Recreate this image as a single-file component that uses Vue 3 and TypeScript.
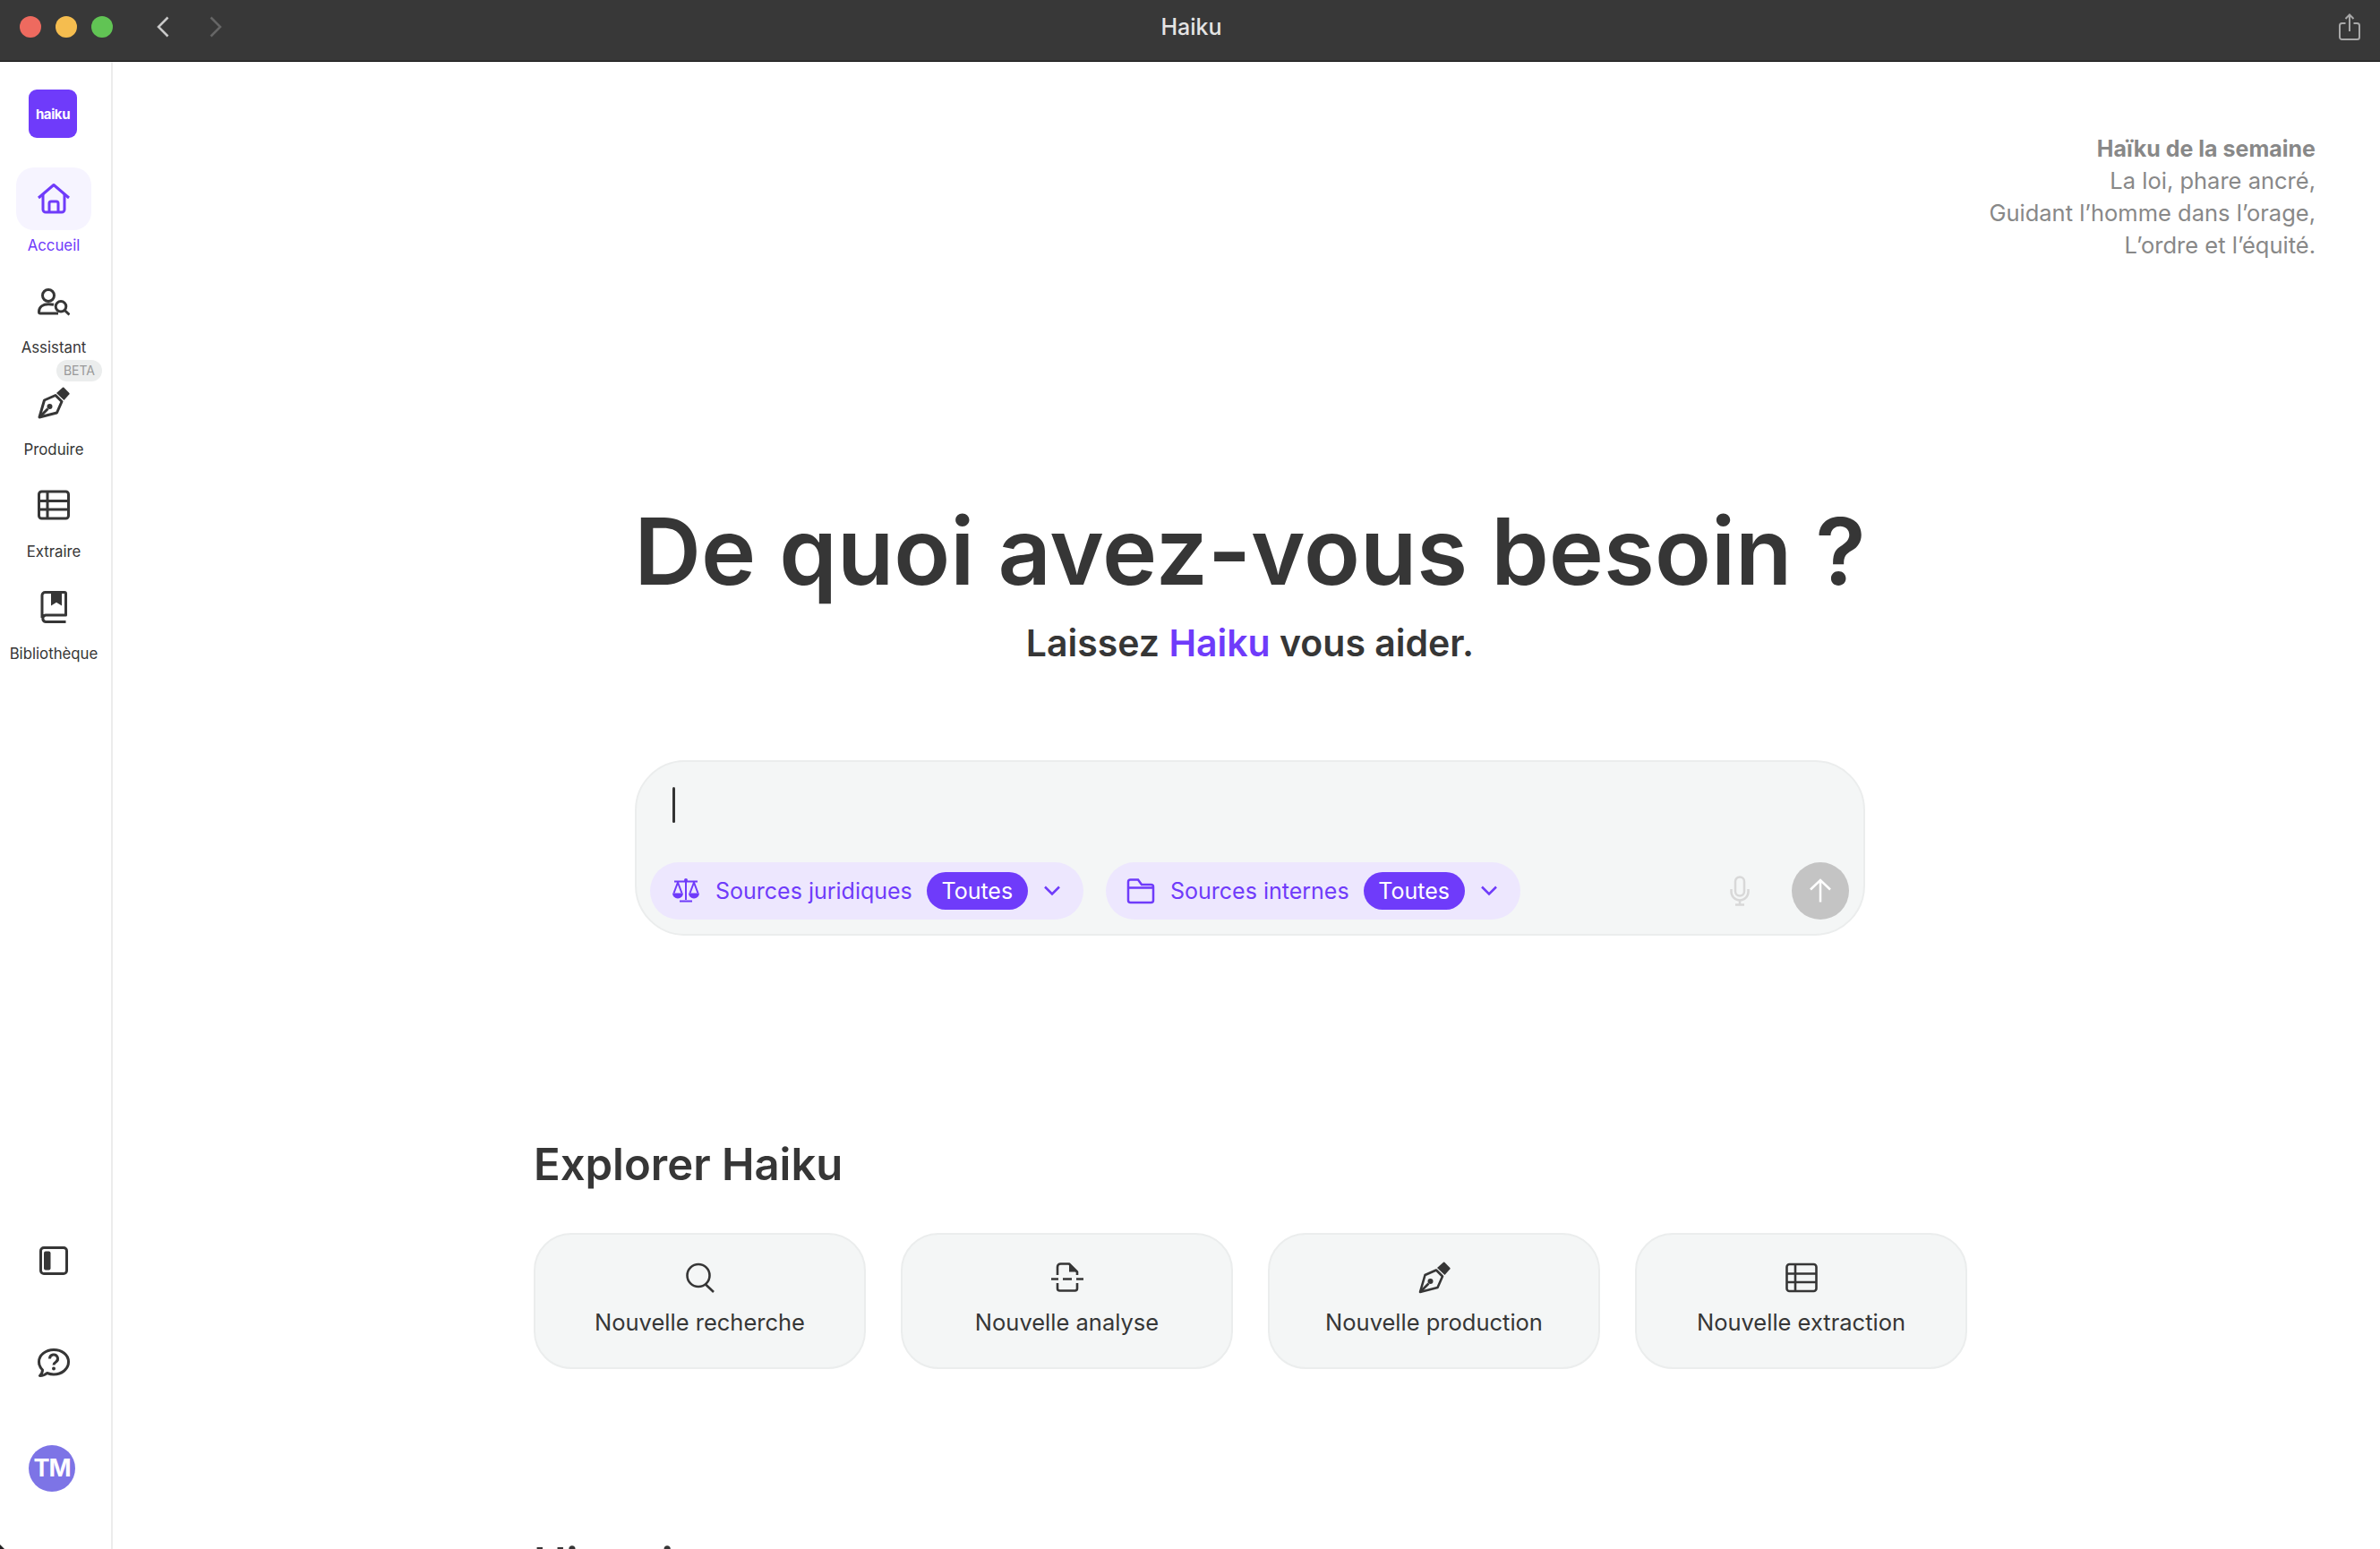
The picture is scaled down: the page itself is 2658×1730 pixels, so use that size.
<script setup lang="ts">
type Shape = { d: string; solid?: boolean }

const pen: Shape[] = [
  { d: 'M2 34 7.5 15 20 9.5 27 16.5 21.5 29Z' },
  { d: 'M21 7 28 .8a1 1 0 0 1 1.3 0L35.4 7a1 1 0 0 1 0 1.3L29.5 15Z', solid: true },
  { d: 'M2 34 11.5 24.5' },
  { d: 'M10.5 22a3 3 0 1 1 6 0 3 3 0 0 1-6 0Z', solid: true },
]
const table: Shape[] = [
  { d: 'M4.5 3h27a3 3 0 0 1 3 3v24a3 3 0 0 1-3 3h-27a3 3 0 0 1-3-3V6a3 3 0 0 1 3-3Z' },
  { d: 'M1.5 13.5h33M1.5 23h33M11 3v30' },
]

const navItems: { label: string; shapes: Shape[]; active?: boolean; beta?: boolean }[] = [
  {
    label: 'Accueil',
    active: true,
    shapes: [
      { d: 'M1 17 18 2.5 35 17' },
      { d: 'M6 13v17a3 3 0 0 0 3 3h18a3 3 0 0 0 3-3V13' },
      { d: 'M13 33V23a2 2 0 0 1 2-2h6a2 2 0 0 1 2 2v10' },
    ],
  },
  {
    label: 'Assistant',
    shapes: [
      { d: 'M12 5.5a6.5 6.5 0 1 0 0 13 6.5 6.5 0 0 0 0-13Z' },
      { d: 'M18 22.3c-1.6-.4-3.6-.6-6-.6-6 0-10.5 3-10.5 8.5 0 1.3.6 1.8 1.5 1.8h20' },
      { d: 'M26 18.5a5.8 5.8 0 1 0 0 11.6 5.8 5.8 0 0 0 0-11.6Z' },
      { d: 'M30.2 28.5 35.5 33.5' },
    ],
  },
  { label: 'Produire', beta: true, shapes: pen },
  { label: 'Extraire', shapes: table },
  {
    label: 'Bibliothèque',
    shapes: [
      { d: 'M5 30V5a3.5 3.5 0 0 1 3.5-3.5H30a1.5 1.5 0 0 1 1.5 1.5v24H9a3.8 3.8 0 0 0 0 7.5h22.5' },
      { d: 'M15 1.5h12v15l-6-3.8-6 3.8Z', solid: true },
    ],
  },
]

const cards: { label: string; shapes: Shape[] }[] = [
  {
    label: 'Nouvelle recherche',
    shapes: [
      { d: 'M16 3a12.5 12.5 0 1 0 0 25 12.5 12.5 0 0 0 0-25Z' },
      { d: 'M23.5 25 33 34' },
    ],
  },
  {
    label: 'Nouvelle analyse',
    shapes: [
      { d: 'M7 15V6a3.5 3.5 0 0 1 3.5-3.5H20L29 11.5V15' },
      { d: 'M20 2.5 29 11.5H20Z', solid: true },
      { d: 'M7 24v6a2.5 2.5 0 0 0 2.5 2.5h17A2.5 2.5 0 0 0 29 30v-6' },
      { d: 'M0 19.5h8M13 19.5h10M28 19.5h8' },
    ],
  },
  { label: 'Nouvelle production', shapes: pen },
  { label: 'Nouvelle extraction', shapes: table },
]

const haikuLines = ['La loi, phare ancré,', 'Guidant l’homme dans l’orage,', 'L’ordre et l’équité.']
</script>

<template>
  <div class="window">
    <header class="titlebar">
      <div class="titlebar-left">
        <span class="light red"></span>
        <span class="light yellow"></span>
        <span class="light green"></span>
        <svg class="back" width="14" height="24" viewBox="0 0 14 24"><path d="M12.5 1.5 2 12l10.5 10.5" /></svg>
        <svg class="forward" width="14" height="24" viewBox="0 0 14 24"><path d="M1.5 1.5 12 12 1.5 22.5" /></svg>
      </div>
      <div class="window-title">Haiku</div>
      <div class="titlebar-right">
        <svg class="share" width="24" height="30" viewBox="0 0 24 30">
          <path d="M7.5 11H3.5A2.5 2.5 0 0 0 1 13.5v13A2.5 2.5 0 0 0 3.5 29h17a2.5 2.5 0 0 0 2.500-2.500v-13A2.500 2.500 0 0 0 20.500 11h-4" />
          <path d="M12 20V1.500M7.500 6 12 1.500 16.500 6" />
        </svg>
      </div>
    </header>

    <div class="body">
      <aside class="sidebar">
        <div class="logo">haiku</div>
        <nav class="nav">
          <div v-for="item in navItems" :key="item.label" class="nav-item" :class="{ active: item.active }">
            <span v-if="item.beta" class="beta">BETA</span>
            <div class="nav-icon">
              <svg class="icon" width="36" height="36" viewBox="0 0 36 36">
                <path v-for="s in item.shapes" :key="s.d" :d="s.d" :class="{ solid: s.solid }" />
              </svg>
            </div>
            <div class="nav-label">{{ item.label }}</div>
          </div>
        </nav>
        <div class="sidebar-foot">
          <svg class="icon" width="36" height="36" viewBox="0 0 36 36">
            <path d="M7 3.500h22a3.500 3.500 0 0 1 3.500 3.500v22a3.500 3.500 0 0 1-3.500 3.500H7A3.500 3.500 0 0 1 3.500 29V7A3.500 3.500 0 0 1 7 3.500Z" />
            <path class="solid" d="M9 7.500h3.500a2 2 0 0 1 2 2v17a2 2 0 0 1-2 2H9a2 2 0 0 1-2-2v-17a2 2 0 0 1 2-2Z" />
          </svg>
          <svg class="icon help" width="36" height="36" viewBox="0 0 36 36">
            <path d="M18 3.500C9 3.500 1.500 9.500 1.500 17c0 3.500 1.500 6.500 4 9 0 2.500-1 4.500-3 6.500 3.500 0 6-1 8-3 2.200.8 4.700 1.500 7.500 1.500 9 0 16.500-6 16.500-14S27 3.500 18 3.500Z" />
            <path d="M13.500 13.500a4.500 4.500 0 1 1 6.800 3.800c-1.400.9-2.300 1.700-2.300 3.200" />
            <path class="solid" d="M16 24.500a2 2 0 1 1 4 0 2 2 0 0 1-4 0Z" />
          </svg>
          <div class="avatar">TM</div>
        </div>
      </aside>

      <main class="main">
        <section class="haiku">
          <strong>Haïku de la semaine</strong>
          <span v-for="line in haikuLines" :key="line">{{ line }}</span>
        </section>

        <section class="hero">
          <h1>De quoi avez-vous besoin ?</h1>
          <p class="subtitle">Laissez <span class="accent">Haiku</span> vous aider.</p>

          <div class="prompt">
            <div class="caret"></div>
            <div class="prompt-bar">
              <button class="source source-legal">
                <svg class="source-icon" width="32" height="32" viewBox="0 0 32 32">
                  <path d="M3 5.500h26M16 6v20M9 27.500h14M7 6.500 2.500 18.500M7 6.500 11.500 18.500M25 6.500 20.500 18.500M25 6.500 29.500 18.500" />
                  <path class="solid" d="M14 4a2 2 0 1 1 4 0 2 2 0 0 1-4 0ZM1 18.500h12a6 6 0 0 1-12 0ZM19 18.500h12a6 6 0 0 1-12 0Z" />
                </svg>
                <span class="source-name">Sources juridiques</span>
                <span class="badge">Toutes</span>
                <svg class="chevron" width="18" height="12" viewBox="0 0 18 12"><path d="M1 1.500l8 8 8-8" /></svg>
              </button>
              <button class="source source-internal">
                <svg class="source-icon" width="32" height="32" viewBox="0 0 32 32">
                  <path d="M2 12V6a2.500 2.500 0 0 1 2.500-2.500h8.500l4 5.500h10.500A2.500 2.500 0 0 1 30 11.500v15a2.500 2.500 0 0 1-2.500 2.500h-23A2.500 2.500 0 0 1 2 26.500ZM2 12.500h28" />
                </svg>
                <span class="source-name">Sources internes</span>
                <span class="badge">Toutes</span>
                <svg class="chevron" width="18" height="12" viewBox="0 0 18 12"><path d="M1 1.500l8 8 8-8" /></svg>
              </button>
              <svg class="mic" width="24" height="34" viewBox="0 0 24 34">
                <path d="M12 1.500a5 5 0 0 0-5 5v11a5 5 0 0 0 10 0v-11a5 5 0 0 0-5-5Z" />
                <path d="M2.500 15v3a9.500 9.500 0 0 0 19 0v-3M12 28v4M7 32.500h10" />
              </svg>
              <button class="send">
                <svg width="28" height="28" viewBox="0 0 28 28"><path d="M14 26.500V2M3 12.500 14 2l11 10.500" /></svg>
              </button>
            </div>
          </div>
        </section>

        <section class="explore">
          <h2>Explorer Haiku</h2>
          <div class="cards">
            <div v-for="card in cards" :key="card.label" class="card">
              <svg class="icon card-icon" width="36" height="36" viewBox="0 0 36 36">
                <path v-for="s in card.shapes" :key="s.d" :d="s.d" :class="{ solid: s.solid }" />
              </svg>
              <div class="card-label">{{ card.label }}</div>
            </div>
          </div>
          <h2 class="history">Historique</h2>
        </section>
      </main>
    </div>
    <span class="corner"></span>
  </div>
</template>

<style>
html,
body {
  margin: 0;
  background: #fff;
  overflow: hidden;
}
</style>

<style scoped>
.window {
  position: relative;
  width: 2658px;
  height: 1730px;
  display: flex;
  flex-direction: column;
  overflow: hidden;
  font-family: Inter, "Liberation Sans", sans-serif;
  color: #363636;
}
.corner {
  position: absolute;
  left: 0;
  bottom: 0;
  width: 5px;
  height: 5px;
  background: #222;
  clip-path: polygon(0 0, 100% 100%, 0 100%);
}

.titlebar {
  height: 60px;
  flex: none;
  display: flex;
  align-items: center;
  background: #383838;
  border-bottom: 1px solid #0c0c0c;
  padding: 0 22px 8px;
}
.titlebar-left,
.titlebar-right {
  flex: 1;
  display: flex;
  align-items: center;
}
.titlebar-right {
  justify-content: flex-end;
}
.light {
  width: 24px;
  height: 24px;
  border-radius: 50%;
  margin-right: 16px;
}
.red { background: #ee6a5f; }
.yellow { background: #f5bd4f; }
.green { background: #61c454; }
.back,
.forward,
.share {
  fill: none;
  stroke-width: 2.5;
}
.back {
  stroke: #c9c9c9;
  margin-left: 33px;
}
.forward {
  stroke: #666;
  margin-left: 45px;
}
.share {
  stroke: #a8a8a8;
  stroke-width: 2;
}
.window-title {
  margin-left: 3px;
  color: #e4e4e4;
  font-size: 25px;
  font-weight: 500;
}

.body {
  flex: 1;
  display: flex;
  min-height: 0;
}

.sidebar {
  width: 120px;
  padding: 31px 4px 64px 0;
  flex: none;
  display: flex;
  flex-direction: column;
  align-items: center;
  border-right: 2px solid #ececec;
}
.logo {
  width: 54px;
  height: 54px;
  margin-left: -2px;
  border-radius: 9px;
  background: #6f3bfa;
  color: #fff;
  font-size: 15px;
  font-weight: 700;
  letter-spacing: -0.4px;
  display: flex;
  align-items: center;
  justify-content: center;
}
.nav {
  margin-top: 33px;
  display: flex;
  flex-direction: column;
  align-items: center;
}
.nav-item {
  position: relative;
  height: 114px;
  display: flex;
  flex-direction: column;
  align-items: center;
}
.nav-icon {
  width: 84px;
  height: 70px;
  border-radius: 20px;
  display: flex;
  align-items: center;
  justify-content: center;
}
.nav-label {
  font-size: 16.8px;
  line-height: 34px;
  white-space: nowrap;
}
.nav-item.active .nav-icon {
  background: #f6f4ff;
}
.nav-item.active {
  color: #6f3bfa;
}
.beta {
  position: absolute;
  top: -13px;
  right: -12px;
  padding: 0 8px;
  height: 24px;
  line-height: 24px;
  border-radius: 12px;
  background: #ebeded;
  color: #999;
  font-size: 14px;
}
.icon {
  fill: none;
  stroke: currentColor;
  stroke-width: 3;
  stroke-linejoin: round;
}
.solid {
  fill: currentColor;
  stroke: none;
}
.sidebar-foot {
  margin-top: auto;
  display: flex;
  flex-direction: column;
  align-items: center;
}
.help {
  margin-top: 78px;
}
.avatar {
  margin-top: 74px;
  margin-left: -4px;
  width: 52px;
  height: 52px;
  border-radius: 50%;
  background: #7d74e6;
  color: #fff;
  font-size: 27px;
  font-weight: 700;
  line-height: 52px;
  text-align: center;
  letter-spacing: -1px;
}

.main {
  flex: 1;
  min-width: 0;
  display: flex;
  flex-direction: column;
  align-items: center;
}
.haiku {
  align-self: flex-end;
  margin: 79px 72px 0 0;
  display: flex;
  flex-direction: column;
  align-items: flex-end;
  font-size: 25.5px;
  line-height: 36px;
  color: #888;
}
.haiku strong {
  font-weight: 700;
  font-size: 25px;
}

.hero {
  width: 1374px;
  margin-left: 8px;
  display: flex;
  flex-direction: column;
  align-items: center;
}
h1 {
  margin: 262px 0 0;
  font-size: 103.5px;
  line-height: 124px;
  font-weight: 600;
  white-space: nowrap;
}
.subtitle {
  margin: 14px 0 0;
  font-size: 41px;
  line-height: 52px;
  font-weight: 600;
}
.accent {
  color: #6f3bfa;
}

.prompt {
  margin-top: 105px;
  width: 100%;
  height: 196px;
  box-sizing: border-box;
  padding: 28px 16px 16px 15px;
  display: flex;
  flex-direction: column;
  background: #f4f6f6;
  border: 2px solid #ebeded;
  border-radius: 56px;
}
.caret {
  width: 3px;
  height: 40px;
  margin-left: 25px;
  background: #333;
  border-radius: 2px;
}
.prompt-bar {
  margin-top: auto;
  display: flex;
  align-items: center;
}
.source {
  height: 64px;
  display: flex;
  align-items: center;
  padding: 0;
  border: none;
  border-radius: 32px;
  background: #ede7fe;
  color: #6f3bfa;
  font-family: inherit;
}
.source-legal {
  width: 484px;
  padding-left: 24px;
}
.source-internal {
  width: 463px;
  margin-left: 25px;
  padding-left: 23px;
}
.source-icon {
  flex: none;
  fill: none;
  stroke: currentColor;
  stroke-width: 2.5;
}
.source-legal .source-icon path:first-child {
  stroke-width: 2;
}
.source-name {
  margin-left: 17px;
  font-size: 25px;
  white-space: nowrap;
}
.badge {
  margin-left: 16px;
  width: 113px;
  height: 42px;
  line-height: 42px;
  border-radius: 21px;
  background: #6f3bfa;
  color: #fff;
  font-size: 25px;
  text-align: center;
}
.chevron {
  margin-left: 18px;
  fill: none;
  stroke: currentColor;
  stroke-width: 2.5;
}
.mic {
  margin-left: auto;
  margin-right: 46px;
  fill: none;
  stroke: #d8d8d8;
  stroke-width: 2.5;
}
.send {
  width: 64px;
  height: 64px;
  border: none;
  border-radius: 50%;
  background: #c4c4c4;
  display: flex;
  align-items: center;
  justify-content: center;
  padding: 0;
}
.send svg {
  fill: none;
  stroke: #fff;
  stroke-width: 2.5;
}

.explore {
  margin-top: 224px;
  margin-left: 12px;
  width: 1604px;
}
h2 {
  margin: 0;
  font-size: 49px;
  line-height: 64px;
  font-weight: 600;
}
.cards {
  margin-top: 44px;
  display: grid;
  grid-template-columns: repeat(4, 371px);
  column-gap: 39px;
}
.card {
  height: 152px;
  box-sizing: border-box;
  padding-top: 30px;
  display: flex;
  flex-direction: column;
  align-items: center;
  background: #f4f6f6;
  border: 2px solid #ebeded;
  border-radius: 42px;
}
.card-icon {
  stroke-width: 2.6;
}
.card-label {
  margin-top: 14px;
  font-size: 25.5px;
  line-height: 36px;
  font-weight: 400;
}
.history {
  margin-top: 186px;
}
</style>
